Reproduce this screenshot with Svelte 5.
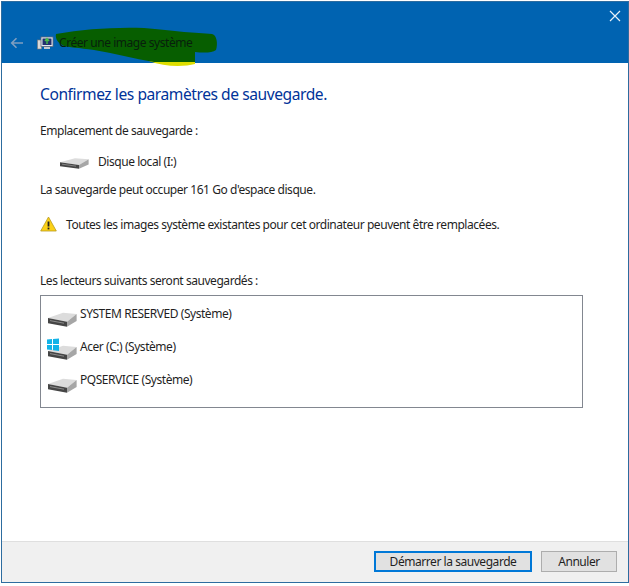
<script>
  const drives = [
    { name: 'SYSTEM RESERVED (Système)', win: false },
    { name: 'Acer (C:) (Système)', win: true },
    { name: 'PQSERVICE (Système)', win: false }
  ];
</script>

{#snippet disk(win)}
  <svg class="disk" width="32" height="32" viewBox="0 0 32 32" preserveAspectRatio="none">
    <path d="M2 19 L17 13.7 L30.6 15 L21 22.7 Z" fill="#dcdcdc" />
    <path d="M2 19 L21 22.7 L21 27.7 L2 24.3 Z" fill="#454545" />
    <path d="M4 21.6 L18 24.2" stroke="#8c8c8c" stroke-width="1" />
    <path d="M21 22.7 L30.6 15 L30.6 22 L21 27.7 Z" fill="#a6a6a6" />
    {#if win}
      <path d="M1 7.5 L6 7 V12 H1 Z M7 7 L13 6.5 V12 H7 Z M1 13 H6 V18 L1 17.5 Z M7 13 H13 V19 L7 18.2 Z" fill="#12b3e8" />
    {/if}
  </svg>
{/snippet}

<div class="window">
  <header>
    <button class="close" aria-label="Fermer">
      <svg width="12" height="12" viewBox="0 0 12 12"><path d="M1 1 L11 11 M11 1 L1 11" stroke="#e8f1f8" stroke-width="1.2" /></svg>
    </button>
    <svg class="scribble" width="170" height="42" viewBox="0 0 170 42">
      <path d="M95 35 H141 V38 C130 41 110 41 95 35 Z" fill="#dede00" />
      <path d="M2 8 C30 3 60 1 90 2 C105 3 118 5 130 6 C140 7 150 7 158 8 C163 9 164 18 162 24 C158 27 150 27 141 26 L141 36 L100 36 C80 33 60 27 40 24 C25 22 14 21 10 20 C4 17 1 13 2 8 Z" fill="#075e00" />
    </svg>
    <div class="nav">
      <svg class="back" width="14" height="12" viewBox="0 0 14 12"><path d="M13 6 H2 M6.5 1.2 L1.7 6 L6.5 10.8" fill="none" stroke="#7f9fc0" stroke-width="1.6" /></svg>
      <svg class="app" width="17" height="16" viewBox="0 0 17 16">
        <rect x="0.5" y="5" width="4" height="9" fill="#d9d9d9" stroke="#777" stroke-width="0.6" />
        <rect x="4" y="2" width="12" height="9.5" fill="#e4e8f0" stroke="#60687a" stroke-width="0.8" />
        <rect x="5.5" y="3.5" width="9" height="6.5" fill="#23306e" />
        <path d="M10 9 V4 M8 6 L10 3.5 L12 6" fill="none" stroke="#47c04a" stroke-width="1.4" />
        <rect x="7" y="12" width="6" height="2" fill="#c4c8d0" />
      </svg>
      <span class="title">Créer une image système</span>
    </div>
  </header>

  <main>
    <h1>Confirmez les paramètres de sauvegarde.</h1>
    <p class="loc">Emplacement de sauvegarde :</p>
    <div class="target">
      {@render disk(false)}
      <span>Disque local (I:)</span>
    </div>
    <p class="space">La sauvegarde peut occuper 161 Go d'espace disque.</p>
    <div class="warning">
      <svg width="17" height="16" viewBox="0 0 17 16">
        <path d="M8.5 1 L16.3 15 H0.7 Z" fill="#fcd116" stroke="#b89a20" stroke-width="0.8" stroke-linejoin="round" />
        <path d="M8.5 5.5 V10.5" stroke="#222" stroke-width="1.8" />
        <rect x="7.6" y="11.6" width="1.8" height="1.8" fill="#222" />
      </svg>
      <span>Toutes les images système existantes pour cet ordinateur peuvent être remplacées.</span>
    </div>
    <p class="list-label">Les lecteurs suivants seront sauvegardés :</p>
    <ul>
      {#each drives as d}
        <li>
          {@render disk(d.win)}
          <span>{d.name}</span>
        </li>
      {/each}
    </ul>
  </main>

  <footer>
    <button class="primary">Démarrer la sauvegarde</button>
    <button>Annuler</button>
  </footer>
</div>

<style>
  :global(body) {
    margin: 0;
    background: #fff;
  }

  .window {
    box-sizing: border-box;
    width: 628px;
    height: 582px;
    margin: 1px 0 0 1px;
    border: 1px solid #2d6c9f;
    display: flex;
    flex-direction: column;
    font-family: "Noto Sans", sans-serif;
    font-size: 12px;
    color: #1f1f1f;
    background: #fff;
    letter-spacing: -0.45px;
  }

  header {
    position: relative;
    height: 61px;
    flex: none;
    background: #0063b1;
    display: flex;
    flex-direction: column;
  }

  .close {
    position: absolute;
    top: 7px;
    right: 6px;
    width: 14px;
    height: 14px;
    padding: 0;
    background: none;
    border: none;
    line-height: 0;
  }

  .nav {
    position: relative;
    margin-top: 32px;
    display: flex;
    align-items: center;
    padding-left: 8px;
  }

  .back {
    margin-right: 13px;
  }

  .app {
    margin-right: 5px;
  }

  .title {
    color: #07200c;
  }

  .scribble {
    position: absolute;
    left: 52px;
    top: 24px;
  }

  main {
    flex: 1;
    padding: 0 45px 0 38px;
    display: flex;
    flex-direction: column;
  }

  h1 {
    margin: 20px 0 0;
    font-size: 15.6px;
    font-weight: 400;
    color: #003399;
    line-height: 22px;
  }

  p {
    margin: 0;
    line-height: 16px;
  }

  .loc {
    margin-top: 18px;
  }

  .target {
    margin: 10px 0 0 18px;
    height: 24px;
    display: flex;
    align-items: center;
    gap: 8px;
  }

  .target .disk {
    height: 24px;
    margin-top: -2px;
  }

  .space {
    margin-top: 9px;
  }

  .warning {
    margin-top: 18px;
    display: flex;
    align-items: center;
    gap: 9px;
    height: 16px;
  }

  .list-label {
    margin-top: 41px;
  }

  ul {
    list-style: none;
    margin: 6px 0 0;
    padding: 1px 0 0 5px;
    height: 113px;
    box-sizing: border-box;
    border: 1px solid #828790;
  }

  li {
    height: 33px;
    display: flex;
    align-items: flex-start;
    gap: 2px;
    padding-top: 8px;
    box-sizing: border-box;
  }

  li .disk {
    margin-top: -6px;
  }

  footer {
    height: 41px;
    flex: none;
    box-sizing: border-box;
    background: #f0f0f0;
    border-top: 1px solid #dfdfdf;
    display: flex;
    justify-content: flex-end;
    align-items: center;
    gap: 9px;
    padding: 0 11px 1px 0;
  }

  footer button {
    box-sizing: border-box;
    width: 76px;
    height: 21px;
    padding: 0;
    font: inherit;
    letter-spacing: inherit;
    color: #1f1f1f;
    background: #e1e1e1;
    border: 1px solid #adadad;
  }

  footer .primary {
    width: 158px;
    border: 2px solid #0078d7;
  }
</style>
